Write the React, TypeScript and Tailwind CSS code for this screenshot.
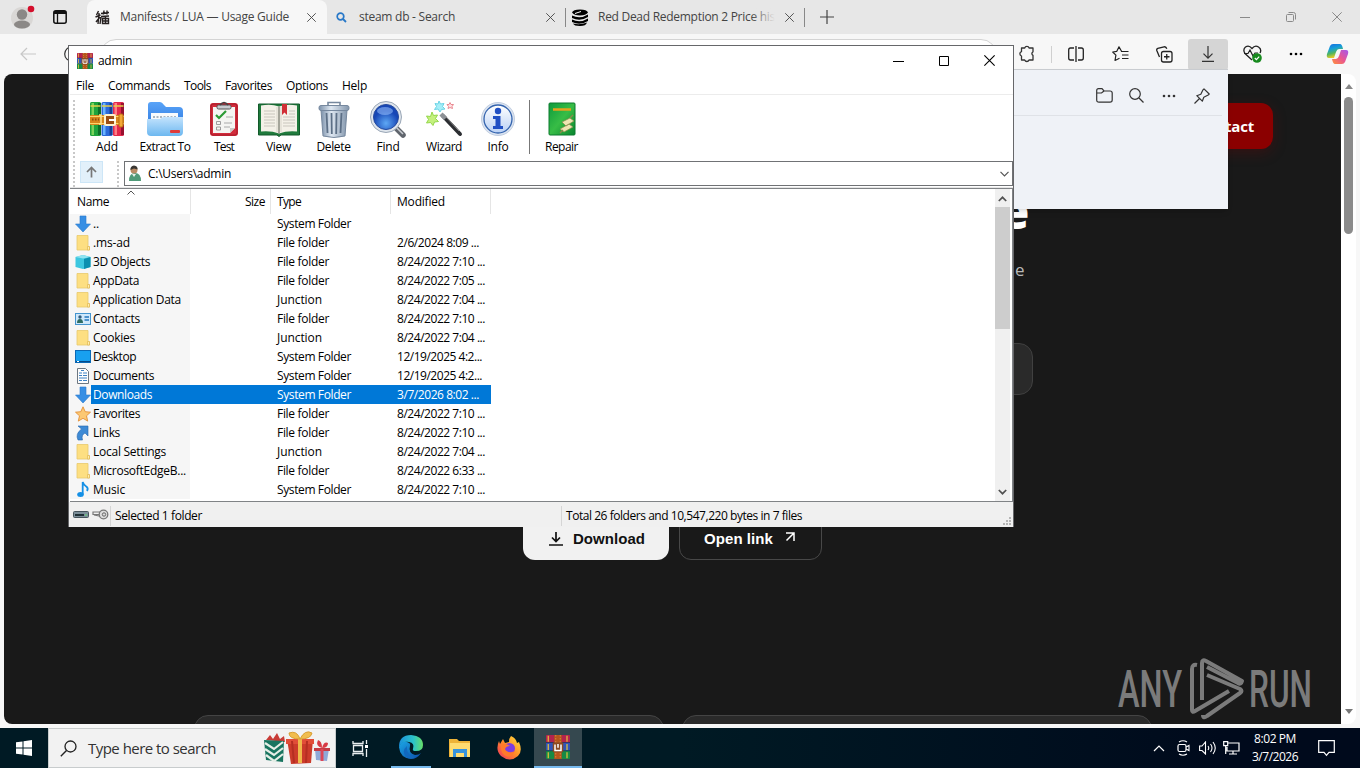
import { useLayoutEffect, useRef, type ReactNode } from "react";

/** Single line of text whose letter spacing is adjusted to fill a given width. */
function T({ w, children, className = "" }: { w: number; children: string; className?: string }) {
  const ref = useRef<HTMLSpanElement>(null);
  useLayoutEffect(() => {
    const el = ref.current;
    if (!el) return;
    el.style.letterSpacing = "0px";
    const natural = el.getBoundingClientRect().width;
    el.style.letterSpacing = `${(w - natural) / children.length}px`;
  }, [w, children]);
  return (
    <span ref={ref} className={`inline-block shrink-0 whitespace-pre ${className}`}>
      {children}
    </span>
  );
}

type P = { className?: string };

function Svg({ w, h, box, className = "", children }: { w: number; h: number; box?: string; className?: string; children: ReactNode }) {
  return (
    <svg width={w} height={h} viewBox={box ?? `0 0 ${w} ${h}`} className={`shrink-0 ${className}`} fill="none">
      {children}
    </svg>
  );
}

const Cross = ({ s = 10, className = "" }: { s?: number; className?: string }) => (
  <Svg w={s} h={s} box="0 0 10 10" className={className}>
    <path d="M.3.3l9.4 9.4M9.700.300L.3 9.700" stroke="currentColor" strokeWidth="1" />
  </Svg>
);

const Books = ({ s = 16, className = "" }: { s?: number; className?: string }) => (
  <Svg w={s} h={s} box="0 0 32 32" className={className}>
    <rect y="0" width="32" height="10" rx="1" fill="#b3244e" />
    <rect y="10" width="32" height="11" rx="1" fill="#2f54b8" />
    <rect y="21" width="32" height="11" rx="1" fill="#168a45" />
    <path d="M3 1v8M3 12v8M3 23v8M28 1v8M28 12v8M28 23v8" stroke="#e8c23a" strokeWidth="1.6" />
    <path d="M0 10h32M0 21h32" stroke="#101830" strokeOpacity=".5" />
    <rect x="11" width="10" height="32" fill="#b5561c" />
    <path d="M13 0v32M19 0v32" stroke="#e79a4a" strokeDasharray="2 2" />
    <rect x="9" y="10" width="14" height="13" rx="1" fill="#8a4a22" />
    <path d="M12 12.500v8h8v-8M16 12v5" stroke="#fff" strokeWidth="2" />
  </Svg>
);

const AddIcon = () => (
  <Svg w={36} h={36}>
    {[
      ["#1fa33c", "#0d6e27", "#7bd35a"],
      ["#2c6ad8", "#163f96", "#69b4ff"],
      ["#e2284c", "#98102f", "#ff7d86"],
    ].map(([a, b, c], i) => (
      <g key={i}>
        <rect x={1 + i * 11.5} y="1" width="11" height="34" rx="1.5" fill={a} />
        <rect x={9 + i * 11.5} y="2" width="3" height="32" fill={b} />
        <rect x={2.5 + i * 11.5} y="2" width="2.5" height="32" fill={c} />
        <path d={`M${1.5 + i * 11.5} 5h10`} stroke="#e6d04a" strokeWidth="1.5" />
      </g>
    ))}
    <rect x="1" y="14" width="34" height="10" rx="1" fill="#d8851d" />
    <path d="M1 15.500h34M1 22.500h34" stroke="#ffd56a" strokeWidth="1.2" />
    <path d="M3 18.500h7" stroke="#8f4d0d" strokeWidth="2" strokeDasharray="1.5 1.5" />
    <path d="M10 14h2v9h-2" stroke="#ffe08a" strokeWidth="1.600" />
    <rect x="16" y="14" width="10" height="10" rx="1" fill="#9c4e12" stroke="#fff3ce" strokeWidth="2" />
    <path d="M20 19h7" stroke="#fff" strokeWidth="2" />
    <rect x="30" y="13" width="4" height="13" rx="1" fill="#f3a936" stroke="#b66a12" />
  </Svg>
);

const ExtractIcon = () => (
  <Svg w={38} h={36}>
    <defs>
      <linearGradient id="exA" x1="0" y1="0" x2="0" y2="1"><stop stopColor="#5aa4f8" /><stop offset="1" stopColor="#2672dc" /></linearGradient>
      <linearGradient id="exB" x1="0" y1="0" x2="0" y2="1"><stop stopColor="#c4e3fd" /><stop offset="1" stopColor="#6db8f0" /></linearGradient>
    </defs>
    <path d="M2 4q0-3 3-3h9q2 0 4 3l2 2h13q4 0 4 4v20H2z" fill="url(#exA)" />
    <path d="M5 12h27v8H5z" fill="#f8fafc" />
    <path d="M7 16h24" stroke="#a9b5c1" strokeWidth="1.800" strokeDasharray="2 1.500" />
    <path d="M1 18h13l3-2h20v15q0 4-4 4H5q-4 0-4-4z" fill="url(#exB)" />
    <rect x="24" y="29" width="10" height="3" rx="1" fill="#df3b3b" />
  </Svg>
);

const TestIcon = () => (
  <Svg w={30} h={36}>
    <rect x="1" y="2" width="28" height="33" rx="3" fill="#d12c3b" />
    <rect x="2" y="3" width="26" height="31" rx="2" stroke="#a81a28" />
    <path d="M4 6h22v21l-5 5H4z" fill="#f5f5f2" />
    <path d="M21 32l5-5h-5z" fill="#c9c9c6" />
    <rect x="8" y="4" width="14" height="4" rx="1.500" fill="#c7cbd0" stroke="#555" />
    <path d="M11 4q4-5 8 0" stroke="#444" strokeWidth="1.500" />
    <path d="M7 14l3 3 7-7" stroke="#2c9b35" strokeWidth="2.200" />
    <path d="M17 16h7M15 22h8M15 26h6" stroke="#aaa" />
    <path d="M7.500 20.500h4v3h-4zM7.500 26h4v3h-4z" stroke="#888" strokeWidth=".8" />
  </Svg>
);

const ViewIcon = () => (
  <Svg w={42} h={36}>
    <path d="M.5 3h41v31H23l-2 1.500-2-1.500H.5z" fill="#1f7a3c" stroke="#12592a" />
    <path d="M3 4.500q10-2 18 1 8-3 18-1v26q-10-1-18 2-8-3-18-2z" fill="#f4f1e8" />
    <path d="M21 5.500v27" stroke="#8b8b80" strokeWidth="1.500" />
    <path d="M19 6v25M23 6v25" stroke="#d8d5ca" />
    <path d="M6 10h11M6 13h11M6 16h11M6 19h11M6 22h11M6 25h11M31 10h6M31 13h6M25 16h12M25 19h12M25 22h12M25 25h12" stroke="#c9c6bd" />
    <path d="M24 3h5v11l-2.500-2.500L24 14z" fill="#d12f36" />
  </Svg>
);

const DeleteIcon = () => (
  <Svg w={32} h={37}>
    <defs><linearGradient id="dl"><stop stopColor="#7c91aa" /><stop offset=".4" stopColor="#dfe8f2" /><stop offset="1" stopColor="#8497ad" /></linearGradient></defs>
    <path d="M3 9h26l-2 26q-11 3-22 0z" fill="url(#dl)" stroke="#76889e" />
    <path d="M8.500 12l1 20M13.500 12l.3 21M18.500 12l-.3 21M23.500 12l-1 20" stroke="#5c6f86" strokeWidth="1.800" />
    <rect x="1" y="4.500" width="30" height="5" rx="2" fill="url(#dl)" stroke="#76889e" />
    <path d="M10 4V1.500h12V4" stroke="#76889e" strokeWidth="1.600" />
  </Svg>
);

const FindIcon = () => (
  <Svg w={38} h={38}>
    <defs><radialGradient id="fi" cy=".75"><stop stopColor="#5ea8f5" /><stop offset="1" stopColor="#1747b6" /></radialGradient></defs>
    <path d="M27 28l7 7" stroke="#60656d" strokeWidth="5.500" strokeLinecap="round" />
    <path d="M28 28l6 6" stroke="#c9cdd2" strokeWidth="1.500" />
    <circle cx="17" cy="17" r="15.500" fill="#dfe5ec" stroke="#9aa7b7" />
    <circle cx="17" cy="17" r="12.500" fill="url(#fi)" stroke="#24499d" />
    <ellipse cx="16" cy="11" rx="8" ry="4" fill="#9cc5ff" opacity=".55" />
  </Svg>
);

const WizardIcon = () => (
  <Svg w={38} h={38}>
    <path d="M18 16l17 18" stroke="#2c2e32" strokeWidth="4" strokeLinecap="round" />
    <path d="M16 14l4.500 4.500" stroke="#8d9196" strokeWidth="4.500" />
    <path d="M21 17l13 14" stroke="#888" strokeWidth="1" />
    <path d="M7 12l1.500 3.500 4-.5-2 3.500 3 3-4 .5-1.500 3.500-2.500-3-4 .5 2-3.500-2-3.500 4 .5z" fill="#c4f07e" stroke="#94d84a" />
    <path d="M14 1l1.500 3 3.500-.5-1.500 3 2.500 2.500-3.500.5-1.500 2.500-2-3-3.500.5 2-3-1.500-3 3 .5z" fill="#a5eef8" stroke="#6bd4e6" />
    <path d="M25 2.500l1 2h2.500l-1.500 2 .5 2-2.500-1-2 1 .5-2-1.500-2h2z" fill="#ffe2e4" stroke="#e98a92" />
  </Svg>
);

const InfoIcon = () => (
  <Svg w={36} h={36}>
    <defs><linearGradient id="inf" x1="0" y1="0" x2="0" y2="1"><stop stopColor="#fff" /><stop offset="1" stopColor="#b9d1f5" /></linearGradient></defs>
    <circle cx="18" cy="18" r="16.500" fill="#dbe4f1" stroke="#c2cee0" />
    <circle cx="18" cy="18" r="14" fill="url(#inf)" stroke="#3464ae" strokeWidth="1.300" />
    <circle cx="18" cy="10" r="3.200" fill="#1f4fc4" />
    <path d="M13 15h7.500v10H23v3H13v-3h2.500v-7H13z" fill="#1f4fc4" />
  </Svg>
);

const RepairIcon = () => (
  <Svg w={28} h={36}>
    <defs><linearGradient id="rp" x2="1" y2="1"><stop stopColor="#0e9a3c" /><stop offset=".5" stopColor="#38bd46" /><stop offset="1" stopColor="#08852f" /></linearGradient></defs>
    <rect x="1" y="2" width="26" height="32" rx="1" fill="url(#rp)" stroke="#0d7a2f" />
    <path d="M5 8.500h18" stroke="#e6a31d" strokeWidth="2.500" />
    <g fill="#eee5b2" stroke="#8a8a4c" strokeWidth=".7">
      <path d="M14 21l8-4 4 3-8 5zM12 28l9-5 4 3-9 5z" />
      <path d="M12 32l3-3M22 17l3-3" strokeWidth="1.500" />
    </g>
  </Svg>
);

const FolderIcon = () => (
  <Svg w={16} h={18}>
    <path d="M2 1.500h11v11l1.500.5v3H2z" fill="#fddf82" stroke="#e8c96c" strokeWidth=".8" />
    <path d="M12.500 12.500h2v3.500h-2z" fill="#ffeeb0" stroke="#e0b650" strokeWidth=".7" />
  </Svg>
);
const DownArrow = () => (
  <Svg w={16} h={18}><path d="M5 1h6v8h4.500L8 17 .5 9H5z" fill="#378fe4" stroke="#2a79cc" strokeWidth=".6" /></Svg>
);
const CubeIcon = () => (
  <Svg w={16} h={16}><path d="M.5 3L8 1l7.500 2v10L8 15 .5 13z" fill="#3cc7e0" /><path d="M.5 3L8 1l7.500 2L8 4.500z" fill="#8fe3f0" /><path d="M9 5l6.500-2v10L9 15z" fill="#0a8fb0" /></Svg>
);
const ContactIcon = () => (
  <Svg w={16} h={12}><rect x=".5" y=".5" width="15" height="11" fill="#cfe8fb" stroke="#4595cf" /><circle cx="5" cy="4" r="1.700" fill="#2f5c80" /><path d="M2 10q0-4 3-4t3 4z" fill="#2f6d63" /><path d="M9.500 4h4.500M9.500 7h4.500" stroke="#2476bd" strokeWidth="1.300" /></Svg>
);
const DesktopIcon = () => (
  <Svg w={16} h={13}><rect x=".5" y=".5" width="15" height="12" fill="#18a0f0" stroke="#0b69b5" /><path d="M1 11.500h14" stroke="#064a87" /><path d="M2 11.500h2" stroke="#fff" /></Svg>
);
const DocIcon = () => (
  <Svg w={16} h={16}><path d="M2.500.5h8l3 3v12h-11z" fill="#fdfdfd" stroke="#6d7780" /><path d="M4 5h3M4 7.500h3M8 5h4M8 7.500h4M4 10h8M4 12.500h3M8 12.500h4M6 2.500h3" stroke="#3c82c4" /></Svg>
);
const StarIcon = () => (
  <Svg w={16} h={16}><path d="M8 .8l2.200 4.900 5.300.5-4 3.600 1.200 5.300L8 12.300l-4.700 2.800 1.200-5.300-4-3.600 5.300-.5z" fill="#fcc873" stroke="#e38f35" strokeWidth=".9" /></Svg>
);
const LinkIcon = () => (
  <Svg w={16} h={16}><path d="M3 1h10v10l-3-3q-4 2-2.500 7H3Q0 9 6.500 4z" fill="#3d8ad5" stroke="#2667ad" strokeWidth=".6" /></Svg>
);
const MusicIcon = () => (
  <Svg w={16} h={17}><ellipse cx="5.500" cy="13.500" rx="3.300" ry="2.500" fill="#1590e6" /><path d="M7.700 13.500V1q1 3 3.500 4.500t.8 4.500" stroke="#1590e6" strokeWidth="1.800" /></Svg>
);

const rows: [() => ReactNode, string, number, string, string][] = [
  [DownArrow, "..", 6, "System Folder", ""],
  [FolderIcon, ".ms-ad", 37, "File folder", "2/6/2024 8:09 ..."],
  [CubeIcon, "3D Objects", 57, "File folder", "8/24/2022 7:10 ..."],
  [FolderIcon, "AppData", 46, "File folder", "8/24/2022 7:05 ..."],
  [FolderIcon, "Application Data", 88, "Junction", "8/24/2022 7:04 ..."],
  [ContactIcon, "Contacts", 47, "File folder", "8/24/2022 7:10 ..."],
  [FolderIcon, "Cookies", 42, "Junction", "8/24/2022 7:04 ..."],
  [DesktopIcon, "Desktop", 43, "System Folder", "12/19/2025 4:2..."],
  [DocIcon, "Documents", 61, "System Folder", "12/19/2025 4:2..."],
  [DownArrow, "Downloads", 59, "System Folder", "3/7/2026 8:02 ..."],
  [StarIcon, "Favorites", 47, "File folder", "8/24/2022 7:10 ..."],
  [LinkIcon, "Links", 27, "File folder", "8/24/2022 7:10 ..."],
  [FolderIcon, "Local Settings", 73, "Junction", "8/24/2022 7:04 ..."],
  [FolderIcon, "MicrosoftEdgeB...", 93, "File folder", "8/24/2022 6:33 ..."],
  [MusicIcon, "Music", 32, "System Folder", "8/24/2022 7:10 ..."],
];
const typeWidth: Record<string, number> = { "System Folder": 74, "File folder": 52, Junction: 45 };

const tools: [() => ReactNode, string, number, string][] = [
  [AddIcon, "Add", 22, "w-[54px]"],
  [ExtractIcon, "Extract To", 51, "w-[62px]"],
  [TestIcon, "Test", 20, "w-[56px]"],
  [ViewIcon, "View", 25, "w-[53px]"],
  [DeleteIcon, "Delete", 34, "w-[57px]"],
  [FindIcon, "Find", 23, "w-[52px]"],
  [WizardIcon, "Wizard", 36, "w-[60px]"],
  [InfoIcon, "Info", 21, "w-[48px]"],
];

function Tool({ icon: Icon, label, w, box }: { icon: () => ReactNode; label: string; w: number; box: string }) {
  return (
    <div className={`flex shrink-0 flex-col items-center ${box}`}>
      <div className="flex h-[38px] items-center"><Icon /></div>
      <T w={w} className="mt-px leading-4">{label}</T>
    </div>
  );
}

function ArchiveWindow() {
  return (
    <div className="absolute left-[68px] top-[45px] flex h-[482px] w-[946px] flex-col border border-b-0 border-[#66676a] bg-white pl-px text-[12px] leading-4 text-black">
      <div className="flex h-[29px] shrink-0 items-center pl-[7px]">
        <Books />
        <T w={34} className="ml-[5px]">admin</T>
        <div className="ml-auto flex items-center gap-[35px] pr-[18px]">
          <Svg w={11} h={10}><path d="M0 5.500h11" stroke="#000" /></Svg>
          <Svg w={10} h={10}><path d="M.5.500h9v9h-9z" stroke="#000" /></Svg>
          <Cross s={11} />
        </div>
      </div>
      <div className="flex h-[20px] shrink-0 items-center border-b border-[#ececec] pl-[6px] pt-[2px]">
        <T w={18}>File</T>
        <T w={62} className="ml-[14px]">Commands</T>
        <T w={27} className="ml-[14px]">Tools</T>
        <T w={47} className="ml-[14px]">Favorites</T>
        <T w={42} className="ml-[14px]">Options</T>
        <T w={25} className="ml-[14px]">Help</T>
      </div>
      <div className="flex h-[63px] shrink-0 pt-[5px]">
        <div className="ml-[3px] mr-[5px] w-[2px] border-l-2 border-dotted border-[#c8c8c8]" />
        {tools.map(([icon, label, w, box]) => <Tool key={label} icon={icon} label={label} w={w} box={box} />)}
        <div className="ml-[7px] h-[54px] w-px bg-[#777]" />
        <div className="w-[5px]" />
        <Tool icon={RepairIcon} label="Repair" w={33} box="w-[53px]" />
      </div>
      <div className="flex h-[30px] shrink-0 items-start border-b border-[#e5e5e5] pt-[3px]">
        <div className="ml-[3px] h-[26px] w-[2px] shrink-0 border-l-2 border-dotted border-[#c8c8c8]" />
        <div className="ml-[5px] flex h-[22px] w-[23px] shrink-0 items-center justify-center border border-[#cde6f7] bg-[#e2f0fa]">
          <Svg w={11} h={12}><path d="M5.500 11.500V1.500M1 6l4.500-4.500L10 6" stroke="#777" strokeWidth="1.700" /></Svg>
        </div>
        <div className="ml-[14px] h-[26px] w-[2px] shrink-0 border-l-2 border-dotted border-[#c8c8c8]" />
        <div className="ml-[5px] flex h-[25px] flex-1 items-center border border-[#707275] pl-[3px] pr-[3px]">
          <Svg w={14} h={17}><path d="M1 16q0-8 6-8t6 8z" fill="#4f9a78" /><circle cx="6" cy="5" r="3.500" fill="#b98b64" /><path d="M2.500 5q-.5-4 3.500-4.500Q10 1 9.500 4.500L6 3.500z" fill="#393632" /><path d="M4 9l2 3 2-3" fill="#e8f0ea" /></Svg>
          <T w={83} className="ml-[6px]">C:\Users\admin</T>
          <Svg w={9} h={6} className="ml-auto"><path d="M.5.800l4 4 4-4" stroke="#555" strokeWidth="1.200" /></Svg>
        </div>
      </div>
      <div className="flex h-[314px] shrink-0 border-b border-t border-r border-[#808386]">
        <div className="flex flex-1 flex-col">
          <div className="flex h-[25px] w-[421px] shrink-0 items-center">
            <div className="relative flex h-full w-[121px] items-center border-r border-[#e5e5e5] pl-[7px]">
              <T w={32}>Name</T>
              <Svg w={8} h={5} className="absolute left-[57px] top-px"><path d="M.5 4.500L4 1l3.500 3.500" stroke="#555" /></Svg>
            </div>
            <div className="flex h-full w-[80px] items-center justify-end border-r border-[#e5e5e5] pr-[5px]"><T w={20}>Size</T></div>
            <div className="flex h-full w-[120px] items-center border-r border-[#e5e5e5] pl-[6px]"><T w={24}>Type</T></div>
            <div className="flex h-full w-[100px] items-center border-r border-[#e5e5e5] pl-[6px]"><T w={48}>Modified</T></div>
          </div>
          {rows.map(([Icon, name, w, type, date]) => {
            const on = name === "Downloads";
            return (
              <div key={name} className="flex h-[19px] w-[421px] shrink-0">
                <div className="flex w-[21px] shrink-0 items-center bg-[#f6f6f6] pl-[5px]"><Icon /></div>
                <div className={`flex flex-1 items-center ${on ? "bg-[#0078d7] text-white" : ""}`}>
                  <div className={`flex h-full w-[99px] items-center pl-[2px] ${on ? "" : "bg-[#f6f6f6]"}`}><T w={w}>{name}</T></div>
                  <div className="w-[87px]" />
                  <div className="w-[120px]"><T w={typeWidth[type]}>{type}</T></div>
                  {date && <T w={date.startsWith("8/") ? 88 : date.startsWith("12") ? 85 : 82}>{date}</T>}
                </div>
              </div>
            );
          })}
        </div>
        <div className="flex w-[15px] shrink-0 flex-col items-center bg-[#f0f0f0]">
          <Svg w={9} h={6} className="mb-[5px] mt-[7px]"><path d="M.800 5l3.700-3.700L8.200 5" stroke="#505050" strokeWidth="1.700" /></Svg>
          <div className="h-[122px] w-[15px] bg-[#cdcdcd]" />
          <Svg w={9} h={6} className="mb-[6px] mt-auto"><path d="M.800 1l3.700 3.700L8.200 1" stroke="#505050" strokeWidth="1.700" /></Svg>
        </div>
        <div className="w-[2px] bg-white" />
      </div>
      <div className="relative -ml-px flex flex-1 items-center bg-[#f0f0f0] pl-px pt-[2px]">
        <Svg w={16} h={7} className="-mt-[2px] ml-[3px]"><rect x=".5" y=".5" width="15" height="6" rx="1" fill="#7b8e99" stroke="#46545c" /><path d="M2 4h9" stroke="#1f3036" strokeWidth="2" /><path d="M12 4h2" stroke="#62dd71" /></Svg>
        <Svg w={17} h={11} className="-mt-[2px] ml-[3px]"><circle cx="11.500" cy="5.500" r="4.300" fill="#ddd" stroke="#777" strokeWidth="1.300" /><circle cx="12" cy="5.500" r="1.700" stroke="#666" /><path d="M8 3H1v2.500h6M7 7L2 6" stroke="#777" strokeWidth="1.200" /></Svg>
        <div className="ml-px h-[20px] w-px bg-[#d5d5d5]" />
        <T w={87} className="ml-[4px]">Selected 1 folder</T>
        <div className="ml-[359px] h-[20px] w-px bg-[#d5d5d5]" />
        <T w={236} className="ml-[4px]">Total 26 folders and 10,547,220 bytes in 7 files</T>
        <Svg w={9} h={9} className="absolute bottom-px right-px"><path d="M6 1h2M3 4h2M6 4h2M0 7h2M3 7h2M6 7h2" stroke="#b5b5b5" strokeWidth="2" /></Svg>
      </div>
    </div>
  );
}

const Dots = ({ className = "" }: P) => (
  <Svg w={14} h={4} className={className}><circle cx="2" cy="2" r="1.300" fill="currentColor" /><circle cx="7" cy="2" r="1.300" fill="currentColor" /><circle cx="12" cy="2" r="1.300" fill="currentColor" /></Svg>
);

function TabStrip() {
  return (
    <div className="flex h-[34px] shrink-0 bg-[#e7e7e7] text-[12px] text-[#444]">
      <div className="flex w-[87px] items-center">
        <Svg w={24} h={24} className="ml-[11px]">
          <circle cx="11" cy="13" r="11" fill="#d9d7d5" /><circle cx="11" cy="9.500" r="5.200" fill="#8b8886" /><ellipse cx="11" cy="19.500" rx="8" ry="4" fill="#8b8886" /><circle cx="20" cy="4" r="3.300" fill="#d40f2c" />
        </Svg>
        <Svg w={14} h={14} className="ml-[18px]"><rect x=".8" y=".8" width="12.400" height="12.400" rx="2" stroke="#111" strokeWidth="1.500" /><path d="M1 2.500h12" stroke="#111" strokeWidth="3" /><path d="M4.500 3v10" stroke="#111" strokeWidth="1.300" /></Svg>
      </div>
      <div className="flex w-[240px] items-center rounded-t-lg bg-[#f7f7f7] pl-[8px]">
        <Svg w={15} h={15}>
          <path d="M3.500 1L1.500 5M4 3L3 14M.5 7l5-2M1 12l4-5M6 3.500l8-1M9 .500l-.500 4M12 .500v4M6 6.500l8-.500M7.500 8.500h6v5h-6zM7.500 11h6M10.500 6v7M6 7l-1 7" stroke="#262020" strokeWidth="1.400" />
        </Svg>
        <T w={169} className="ml-[10px]">Manifests / LUA — Usage Guide</T>
        <Cross s={9} className="ml-[18px]" />
      </div>
      <div className="flex w-[238px] items-center rounded-bl-lg pl-[9px]">
        <Svg w={11} h={11}><circle cx="4.500" cy="4.500" r="3.300" stroke="#2878c8" strokeWidth="1.700" /><path d="M7 7l3 3" stroke="#2878c8" strokeWidth="1.800" /></Svg>
        <T w={96} className="ml-[12px]">steam db - Search</T>
        <Cross s={9} className="ml-[91px]" />
      </div>
      <div className="mt-2 h-[19px] w-px bg-[#888]" />
      <div className="flex w-[238px] items-center pl-[6px]">
        <Svg w={16} h={17}>
          <path d="M0 3.500Q1 .500 8 .500t8 3q-2 3-8 3t-8-3z" fill="#000" />
          <path d="M0 6.500q8 4 16-1v2.500q-8 5-16 1zM0 10.500q8 4 16-1V12q-8 5-16 1zM1 14.500q7 2 14-1-1 3.500-7 3.500t-7-2.500z" fill="#000" />
          <path d="M3 4.500l6-2" stroke="#fff" />
        </Svg>
        <div className="relative ml-[10px] w-[177px] overflow-hidden"><T w={177}>Red Dead Redemption 2 Price his</T><div className="absolute inset-y-0 right-0 w-[24px] bg-linear-to-r from-transparent to-[#e7e7e7]" /></div>
        <Cross s={9} className="ml-[10px]" />
      </div>
      <div className="mt-2 h-[19px] w-px bg-[#888]" />
      <Svg w={14} h={14} className="ml-[15px] mt-[10px]"><path d="M7 0v14M0 7h14" stroke="#444" strokeWidth="1.200" /></Svg>
      <div className="ml-auto flex items-center gap-[36px] pr-[18px] text-[#8a8a8a]">
        <Svg w={10} h={10}><path d="M0 5.500h10" stroke="currentColor" /></Svg>
        <Svg w={10} h={10}><path d="M.500 3.500q0-1 1-1h5q1 0 1 1v5q0 1-1 1h-5q-1 0-1-1zM2.500.500h5q2 0 2 2v5" stroke="currentColor" /></Svg>
        <Cross s={10} />
      </div>
    </div>
  );
}

function Toolbar() {
  return (
    <div className="flex h-[40px] shrink-0 items-center bg-[#f7f7f7] text-[#333]">
      <Svg w={16} h={14} className="ml-[20px]"><path d="M16 7H1M7 1L1 7l6 6" stroke="#c7c7c7" strokeWidth="1.200" /></Svg>
      <Svg w={16} h={16} className="ml-[28px]"><circle cx="8" cy="8" r="7.300" stroke="#333" strokeWidth="1.200" /></Svg>
      <div className="ml-[20px] mt-[2px] h-[32px] w-[897px] rounded-[16px] border border-[#d4d4d4] bg-white" />
      <Svg w={18} h={18} className="ml-[22px]"><path d="M3 3.500h3.200a2.300 2.300 0 0 1 4.400 0H14.500v3.800a2 2 0 0 0 0 3.600v4.600h-4a2.300 2.300 0 0 1-4.300 0H3v-4a2.300 2.300 0 0 1 0-4.400z" transform="translate(-.5 -.5)" stroke="currentColor" strokeWidth="1.300" strokeLinejoin="round" /></Svg>
      <div className="ml-[14px] h-[17px] w-px bg-[#d0d0d0]" />
      <Svg w={16} h={16} className="ml-[16px]"><path d="M6 2H2.500Q.700 2 .700 4v8q0 2 1.800 2H6M8 0v16M10 2h3.500q1.800 0 1.800 2v8q0 2-1.800 2H10" stroke="#222" strokeWidth="1.300" /></Svg>
      <Svg w={17} h={16} className="ml-[28px]"><path d="M9.500 5.200L7 .800 4.800 5.300.700 6l3.200 3.200L3 14.500l4.500-2.300M9 5.500h7.500M10 9h6.500M10 12.500h6.500" stroke="#222" strokeWidth="1.200" strokeLinejoin="round" /></Svg>
      <Svg w={17} h={17} className="ml-[27px]"><rect x="5.500" y="5.500" width="10.500" height="10.500" rx="2" stroke="#222" strokeWidth="1.300" /><path d="M10.750 8v5.500M8 10.750h5.500M3.500 11L.800 4.500q-.5-1.500 1-2.200L8 .800q2-.5 2.800 2" stroke="#222" strokeWidth="1.300" /></Svg>
      <div className="ml-[15px] flex h-[31px] w-[40px] items-center justify-center rounded-[3px] bg-[#d5d5d5]">
        <Svg w={12} h={16}><path d="M6 0v12M1.500 7.700L6 12.200l4.500-4.500M0 15.300h12" stroke="#333" strokeWidth="1.200" /></Svg>
      </div>
      <Svg w={19} h={18} className="ml-[15px]"><path d="M9 15L2 8.500Q-.500 4.500 2.500 2 6-.300 9 3.500q3-3.800 6.500-1.500T17 8" stroke="#222" strokeWidth="1.300" /><path d="M1 8.500h4L7 5l3 6 2-3h3" stroke="#222" strokeWidth="1.200" /><circle cx="14" cy="13" r="4.800" fill="#178a1e" /><path d="M11.800 13l1.600 1.600 2.800-3" stroke="#fff" strokeWidth="1.200" /></Svg>
      <Dots className="ml-[27px] text-black" />
      <Svg w={23} h={22} className="ml-auto mr-[11px]">
        <defs>
          <linearGradient id="cp1" x1="0" y1="0" x2=".3" y2="1"><stop stopColor="#1769e2" /><stop offset=".4" stopColor="#169fd8" /><stop offset=".7" stopColor="#52b65e" /><stop offset="1" stopColor="#f1cd25" /></linearGradient>
          <linearGradient id="cp2" x1="1" y1="0" x2="0" y2="1"><stop stopColor="#a456ef" /><stop offset=".5" stopColor="#e95592" /><stop offset="1" stopColor="#ff9139" /></linearGradient>
        </defs>
        <path d="M7 1h7q2 0 3 5h-4q-2 0-3 3l-2 6H3Q0 15 1 11L4 3Q5 1 7 1z" fill="url(#cp1)" />
        <path d="M16 21H9q-2 0-3-5h4q2 0 3-3l2-6h5q3 0 2 4l-3 8q-1 2-3 2z" fill="url(#cp2)" />
      </Svg>
    </div>
  );
}

function PageView() {
  return (
    <div className="flex h-[654px] shrink-0 bg-[#f7f7f7] pb-[4px] pl-[4px] pr-[4px]">
      <div className="relative flex w-[1337px] flex-col overflow-hidden rounded-l-lg bg-[#191919] text-white">
        <div className="flex h-[120px] shrink-0 justify-end pr-[68px] pt-[29px]">
          <div className="flex h-[46px] w-[110px] items-center justify-end rounded-[12px] bg-[#8b0000] pr-[19px] text-[15px] font-bold shadow-[0_4px_14px_rgba(139,0,0,0.25)]">
            <T w={57}>Contact</T>
          </div>
        </div>
        <div className="mx-auto flex w-[958px] flex-1 flex-col">
          <div className="-mt-[8px] h-[50px] self-end pr-[122px] font-['Noto_Sans'] text-[48px] font-black leading-[50px]">Guide</div>
          <div className="mt-[20px] self-end pr-[127px] text-[17px] leading-[28px] text-[#b8b8b8]">the</div>
          <div className="mr-[119px] mt-[59px] h-[52px] w-[200px] self-end rounded-[14px] border border-[#404040] bg-[#2a2a2a]" />
          <div className="mt-[119px] flex justify-center gap-[10px] font-['Liberation_Sans'] text-[15px] font-bold">
            <div className="flex h-[46px] w-[146px] items-center rounded-[12px] bg-[#f1f1f1] pl-[26px] pt-[4px] text-[#111]">
              <Svg w={14} h={14}><path d="M7 0v9M3 5.500l4 4 4-4M0 13h14" stroke="#111" strokeWidth="1.700" /></Svg>
              <T w={72} className="ml-[10px]">Download</T>
            </div>
            <div className="flex h-[46px] w-[143px] items-center rounded-[12px] border border-[#484848] pl-[24px] pt-[4px]">
              <T w={69}>Open link</T>
              <Svg w={10} h={10} className="mb-[5px] ml-[12px]"><path d="M1 1h8v8M9 1L1.500 8.500" stroke="#fff" strokeWidth="1.500" /></Svg>
            </div>
          </div>
          <div className="mt-[155px] flex shrink-0 justify-between">
            <div className="h-[60px] w-[470px] shrink-0 rounded-[14px] border border-[#444] bg-[#2a2a2a]" />
            <div className="h-[60px] w-[470px] shrink-0 rounded-[14px] border border-[#444] bg-[#2a2a2a]" />
          </div>
        </div>
      </div>
      <div className="flex w-[15px] shrink-0 flex-col items-center rounded-r-lg bg-white">
        <Svg w={8} h={5} className="mt-[10px]"><path d="M4 0l4 5H0z" fill="#888" /></Svg>
        <div className="mt-[8px] h-[137px] w-[9px] rounded-full bg-[#8b8b8b]" />
        <Svg w={8} h={5} className="mb-[10px] mt-auto"><path d="M0 0h8L4 5z" fill="#777" /></Svg>
      </div>
    </div>
  );
}

function DownloadsPanel() {
  return (
    <div className="absolute left-[868px] top-[69px] h-[140px] w-[360px] border-t border-[#c9ccd0] bg-[#eff2f7] text-[#333] shadow-md">
      <div className="mr-[6px] flex h-[46px] items-center justify-end border-b border-[#dfe2e7] pr-[12px] pt-[6px]">
        <Svg w={17} h={15}><path d="M.700 5V2.500Q.700.700 2.500.700H6L8 3h6q2.200 0 2.200 2v7q0 2.200-2.200 2.200H3Q.700 14.200.700 12zM.700 5H5.500L8 3" stroke="currentColor" strokeWidth="1.200" /></Svg>
        <Svg w={15} h={15} className="ml-[16px]"><circle cx="6" cy="6" r="5.300" stroke="currentColor" strokeWidth="1.200" /><path d="M10 10l4.500 4.500" stroke="currentColor" strokeWidth="1.200" /></Svg>
        <Dots className="ml-[18px]" />
        <Svg w={16} h={16} className="ml-[18px]"><path d="M10 .800l5.200 5.200-1 1-4.400 2.200-1.500 4L2.800 7.700l4-1.500L9 1.800zM5.500 10.500L.500 15.500" stroke="currentColor" strokeWidth="1.200" strokeLinejoin="round" /></Svg>
      </div>
    </div>
  );
}

function Watermark() {
  return (
    <Svg w={210} h={68} className="absolute left-[1118px] top-[658px] opacity-65">
      <g fill="#b0b0b0" fontFamily="Roboto, sans-serif" fontSize="52" fontWeight="500">
        <text x="0" y="49" textLength="64" lengthAdjust="spacingAndGlyphs">ANY</text>
        <text x="131" y="49" textLength="63" lengthAdjust="spacingAndGlyphs">RUN</text>
      </g>
      <path d="M79 7Q74 6 74 11v41q0 3 3 1l34-20M84 42V5q0-4 4-2l36 20q-1 4-4 2L89 9M89 17l33 14q3 2 0 4L89 58q-4 3-4-1" stroke="#b0b0b0" strokeWidth="4" strokeLinejoin="round" />
    </Svg>
  );
}

const Gifts = () => (
  <Svg w={70} h={34}>
    <path d="M3 9l4-5 3 4 4-6 3 6 4-3 1 6z" fill="#c83c37" />
    <path d="M1 9l20 1-1 21-17-2z" fill="#18745f" />
    <path d="M2 12l9 6 9-7M2 18l9 6 9-7M3 24l8 6 9-7" stroke="#e5eee6" strokeWidth="2.200" />
    <path d="M24 8h26l-2 24-20 1z" fill="#cc3b2b" /><path d="M23 8h28v5H23z" fill="#e14d38" />
    <path d="M29 10l2 22M44 10l-1 22" stroke="#b52e22" strokeWidth="2" /><path d="M37 8v24" stroke="#efb74a" strokeWidth="4" />
    <path d="M37 8q-11 0-11-6 8-3 11 6 5-10 12-6-1 6-12 6z" fill="#f1bd4e" stroke="#d99f35" />
    <path d="M52 18h14l-2 12-11-1z" fill="#8fa9d8" /><path d="M51 17h16v3H51z" fill="#c53b44" />
    <path d="M59 18v12" stroke="#dc4657" strokeWidth="3" /><path d="M59 17q-7-2-4-8 4 1 4 8 2-7 6-5 0 5-6 5z" fill="#d83b45" />
  </Svg>
);

function Taskbar() {
  return (
    <div className="flex h-[40px] shrink-0 bg-linear-to-r from-[#001a24] from-50% to-[#000a1c] to-90% text-white">
      <div className="flex w-[48px] items-center justify-center">
        <Svg w={16} h={16}><path d="M0 2.300L6.500 1.400v6.100H0zM7.500 1.200L16 0v7.500H7.500zM0 8.500h6.500v6.100L0 13.700zM7.500 8.500H16V16l-8.500-1.200z" fill="#fff" /></Svg>
      </div>
      <div className="flex w-[288px] items-center border border-[#c8cccd] bg-[#f2f2f2] pl-[11px] text-[#333]">
        <Svg w={17} h={17}><circle cx="10.500" cy="6.500" r="5.500" stroke="#222" strokeWidth="1.300" /><path d="M6.500 10.500L.800 16.200" stroke="#222" strokeWidth="1.400" /></Svg>
        <T w={128} className="ml-[11px] text-[15px]">Type here to search</T>
        <span className="ml-auto mr-[2px]"><Gifts /></span>
      </div>
      <div className="flex w-[49px] items-center justify-center">
        <Svg w={17} h={17}><path d="M1 1v2.500h10V1M1 16v-2.500h10V16M1.500 5.500h9v6h-9zM14.500 0v4M14.500 9v8" stroke="#e9eef0" strokeWidth="1.300" /><path d="M13 5h3v3h-3z" fill="#fff" /></Svg>
      </div>
      <div className="ml-px flex w-[49px] items-center justify-center">
        <div className="flex h-full w-[40px] items-center justify-center border-b-2 border-[#76b9ed]">
          <Svg w={24} h={24}>
            <defs><linearGradient id="ed1" x2="1"><stop stopColor="#1a8fdc" /><stop offset=".6" stopColor="#2cc3c9" /><stop offset="1" stopColor="#67df67" /></linearGradient><linearGradient id="ed2" x2="1" y2="1"><stop stopColor="#1ba5e5" /><stop offset="1" stopColor="#0b4ca8" /></linearGradient></defs>
            <path d="M0 12Q0 0 12 0q12 1 12 10 0 6-7 6-4 0-3-2 2-6-4-7Q3 6 0 12z" fill="url(#ed1)" />
            <path d="M0 12q2-6 8-5 4 1 3 4-2 7 5 9 4 0 6-2Q18 24 12 24 1 23 0 12z" fill="url(#ed2)" />
            <path d="M8 11q-1 9 8 11-5 3-9 0-5-6 1-11z" fill="#1168be" />
          </Svg>
        </div>
      </div>
      <div className="flex w-[49px] items-center justify-center">
        <Svg w={22} h={20}><path d="M0 1h8l2 2h11v16H0z" fill="#eeb338" /><path d="M1 5h20v14H1z" fill="#ffdc70" /><path d="M4 19v-8h14v8h-3v-4H7v4z" fill="#3793dc" /></Svg>
      </div>
      <div className="flex w-[49px] items-center justify-center">
        <Svg w={24} h={24}>
          <defs><linearGradient id="ff" x1="1" y1="0" x2="0" y2="1"><stop stopColor="#ffe53e" /><stop offset=".5" stopColor="#ff8b29" /><stop offset="1" stopColor="#ef2d61" /></linearGradient></defs>
          <path d="M14 0q5 2 6 7l2-1q4 9-1 14-8 7-17 0Q-2 14 2 5l1 3 3-5 2 4 4-1q0-4 2-6z" fill="url(#ff)" />
          <circle cx="12.500" cy="12.500" r="5.500" fill="#7c3ce0" /><path d="M4 8q5-1 9 2-4 0-5 3 2 4 7 3 2 0 3-2-2 7-8 6.500Q3 19 4 8z" fill="#ff7a2a" />
        </Svg>
      </div>
      <div className="ml-px flex w-[48px] items-center justify-center border-b-2 border-[#76b9ed] bg-[#35484f]"><Books s={24} /></div>
      <div className="ml-auto flex items-center">
        <Svg w={12} h={7}><path d="M1 6l5-5 5 5" stroke="#fff" strokeWidth="1.200" /></Svg>
        <Svg w={13} h={16} className="ml-[12px]"><rect x="1" y="4.500" width="8" height="7" rx="1.500" stroke="#fff" strokeWidth="1.200" /><path d="M9 7l3-1.500v5L9 9M2 2q4-2.500 8 0M2 14q4 2.500 8 0" stroke="#fff" strokeWidth="1.100" /></Svg>
        <Svg w={17} h={14} className="ml-[9px]"><path d="M.600 5H3l3.500-4v12L3 9.500H.600zM9 5q1.500 2 0 4M11.500 3q3 4 0 8M14 1q4.500 6 0 12" stroke="#fff" strokeWidth="1.100" /></Svg>
        <Svg w={17} h={14} className="ml-[7px]"><path d="M5 2h11v8H4V6M10 10v3M6 13h8M.700.700h4v4h-4zM2.700 5v8" stroke="#fff" strokeWidth="1.200" /></Svg>
        <div className="ml-[10px] flex w-[50px] flex-col items-center text-[12px] leading-[18px]">
          <T w={42}>8:02 PM</T>
          <T w={46}>3/7/2026</T>
        </div>
        <Svg w={17} h={17} className="ml-[18px] mr-[25px]"><path d="M.700.700h15.600v11.600H11l-2.500 3-2.500-3H.700z" stroke="#fff" strokeWidth="1.200" /></Svg>
      </div>
    </div>
  );
}

export default function App() {
  return (
    <div className="relative flex h-[768px] w-[1360px] flex-col overflow-hidden bg-[#f7f7f7] font-['Open_Sans','Noto_Sans',sans-serif]">
      <TabStrip />
      <Toolbar />
      <PageView />
      <Taskbar />
      <DownloadsPanel />
      <ArchiveWindow />
      <Watermark />
    </div>
  );
}
